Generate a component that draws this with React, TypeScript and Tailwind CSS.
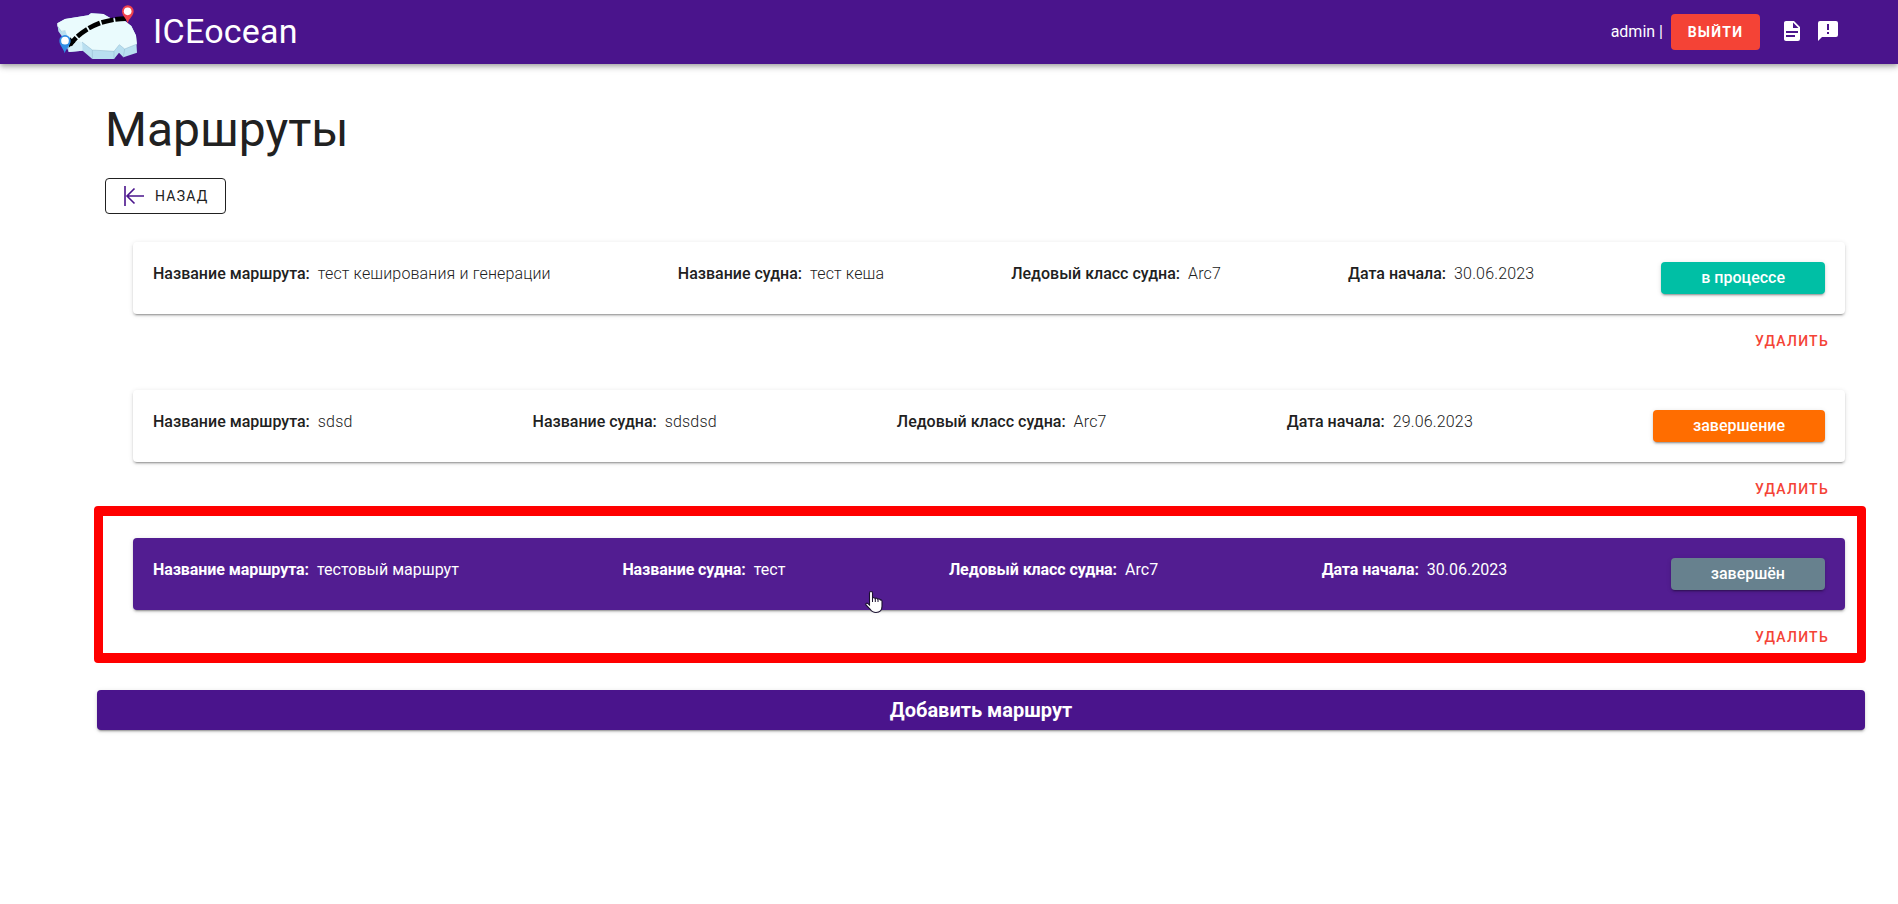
type Route = {
  name: string;
  ship: string;
  iceClass: string;
  date: string;
  status: string;
  chip: string;
  hovered?: boolean;
};

const routes: Route[] = [
  { name: "тест кеширования и генерации", ship: "тест кеша", iceClass: "Arc7", date: "30.06.2023", status: "в процессе", chip: "bg-[#00bfa5]" },
  { name: "sdsd", ship: "sdsdsd", iceClass: "Arc7", date: "29.06.2023", status: "завершение", chip: "bg-[#ff6d00]" },
  { name: "тестовый маршрут", ship: "тест", iceClass: "Arc7", date: "30.06.2023", status: "завершён", chip: "bg-[#67818e]", hovered: true },
];

function Logo() {
  return (
    <svg viewBox="0 0 300 192" className="h-16 w-[100px] shrink-0">
      <path d="M52 70 L75 57 L145 46 L153 40 L190 42 L212 55 L247 57 L274 78 L288 108 L291 158 L250 172 L237 158 L222 177 L157 177 L128 152 L86 156 L72 118 L55 94 Z" fill="#b9dff0" />
      <path d="M52 70 L75 57 L145 46 L153 40 L190 42 L212 55 L247 57 L274 78 L288 106 L291 132 L254 147 L238 134 L222 154 L157 150 L126 126 L88 124 L76 92 L66 96 L52 78 Z" fill="#eafbfd" />
      <path d="M88 124 L126 126 L128 152 L86 156 Z" fill="#d9f2fa" />
      <path d="M52 78 L64 94 L76 92 M126 126 L157 150 L222 154 L238 134 L254 147 L291 132 M157 150 V177 M222 154 V177 M254 147 L250 172" fill="none" stroke="#8fb6cc" strokeWidth="1.5" />
      <path d="M90 135 Q120 92 180 69 Q220 56 258 56" fill="none" stroke="#000" strokeWidth="14" strokeDasharray="37 5" strokeDashoffset="8" />
      <path d="M86 143 L90 112 L106 127 Z" fill="#000" />
      <path d="M263 70 C259 54 246 48 246 33 A17.500 17.500 0 0 1 281 33 C281 48 267 54 263 70 Z" fill="#f0434c" />
      <circle cx="263" cy="34" r="11.500" fill="#fff" />
      <path d="M74 160 C71 144 58 137 58 122 A17 17 0 0 1 92 122 C92 137 78 144 74 160 Z" fill="#2f8de4" />
      <circle cx="75" cy="122" r="11.500" fill="#fff" />
    </svg>
  );
}

function Header() {
  return (
    <header className="flex h-16 items-center bg-[#4a148c] pl-10 pr-[58px] text-white shadow-[0_2px_4px_-1px_rgba(0,0,0,0.2),0_4px_5px_rgba(0,0,0,0.14),0_1px_10px_rgba(0,0,0,0.12)]">
      <Logo />
      <span className="mb-0.5 ml-[13px] text-[34px] leading-10 tracking-[0.25px]">ICEocean</span>
      <span className="ml-auto text-base">admin |</span>
      <button className="ml-2 h-9 w-[89px] rounded bg-[#f44336] text-center text-sm font-bold tracking-[1.25px]">ВЫЙТИ</button>
      <div className="mb-0.5 ml-5 flex gap-3">
        <svg viewBox="0 0 24 24" fill="currentColor" className="size-6">
          <path d="M13 9h5.500L13 3.500V9M6 2h8l6 6v12a2 2 0 0 1-2 2H6c-1.110 0-2-.89-2-2V4c0-1.110.89-2 2-2m9 16v-2H6v2h9m3-4v-2H6v2h12Z" />
        </svg>
        <svg viewBox="0 0 24 24" fill="currentColor" className="size-6">
          <path d="M13 11h-2V5h2m0 10h-2v-2h2m7-11H4a2 2 0 0 0-2 2v18l4-4h14a2 2 0 0 0 2-2V4a2 2 0 0 0-2-2Z" />
        </svg>
      </div>
    </header>
  );
}

function Field({ label, value, hovered }: { label: string; value: string; hovered?: boolean }) {
  return (
    <div className="whitespace-nowrap">
      <span className={hovered ? "mr-2 font-bold tracking-[-0.08px]" : "mr-2 font-medium"}>{label}</span>
      <span className={hovered ? "font-normal" : "font-light tracking-[0.15px]"}>{value}</span>
    </div>
  );
}

function HandCursor() {
  return (
    <svg viewBox="0 0 18 24" className="absolute left-[732px] top-[52px] h-6 w-[18px]">
      <path
        d="M6 1.500c.9 0 1.500.6 1.500 1.500v5c.3-.5 2.400-.5 2.700.5.500-.6 2.300-.4 2.600.7.600-.5 2.200-.3 2.600.8.900-.3 1.600.3 1.600 1.300v5c0 3.700-2.300 6.200-6 6.200-3 0-4.500-1.200-6-3.500L1 15c-.8-1.400.8-2.400 2-1.400l1.500 1.400V3c0-.9.600-1.500 1.500-1.500Z"
        fill="#fff"
        stroke="#1a1030"
        strokeWidth="1.100"
      />
      <path d="M7.500 8v4M10.300 8.500V12M13 9.300V12" stroke="#1a1030" strokeWidth="1" />
    </svg>
  );
}

function RouteCard({ route }: { route: Route }) {
  return (
    <div className="relative h-[148px]">
      <div
        className={`flex h-[72px] items-start justify-between rounded px-5 pt-5 text-base leading-6 shadow-[0_3px_1px_-2px_rgba(0,0,0,0.2),0_2px_2px_rgba(0,0,0,0.14),0_1px_5px_rgba(0,0,0,0.12)] ${
          route.hovered ? "bg-[#521d91] text-white" : "bg-white text-[#212121]"
        }`}
      >
        <Field label="Название маршрута:" value={route.name} hovered={route.hovered} />
        <Field label="Название судна:" value={route.ship} hovered={route.hovered} />
        <Field label="Ледовый класс судна:" value={route.iceClass} hovered={route.hovered} />
        <Field label="Дата начала:" value={route.date} hovered={route.hovered} />
        <span className={`h-8 rounded px-10 font-medium leading-8 text-white shadow-[0_3px_1px_-2px_rgba(0,0,0,0.2),0_2px_2px_rgba(0,0,0,0.14),0_1px_5px_rgba(0,0,0,0.12)] ${route.chip}`}>
          {route.status}
        </span>
      </div>
      <div className="flex justify-end pr-4 pt-[9px]">
        <button className="h-9 text-sm font-medium tracking-[1.25px] text-[#f44336]">УДАЛИТЬ</button>
      </div>
      {route.hovered && (
        <>
          <div className="absolute -left-[39px] -top-8 h-[157px] w-[1772px] rounded border-x-9 border-y-10 border-[#ff0000]" />
          <HandCursor />
        </>
      )}
    </div>
  );
}

export default function App() {
  return (
    <div className="min-h-[904px] bg-white font-['Roboto',sans-serif] text-[#212121]">
      <Header />
      <main className="pl-[97px] pr-[33px] pt-[41px]">
        <div className="pl-2">
          <h1 className="h-[49px] text-[48px] font-normal leading-[50px]">Маршруты</h1>
          <button className="mt-6 flex h-9 w-[121px] items-center rounded border border-[#212121] pl-[17px] text-sm tracking-[1.25px]">
            <svg viewBox="0 0 22 22" className="mr-2.5 size-[22px]" fill="none" stroke="#4a148c" strokeWidth="1.600">
              <path d="M2 1v20M21 11H4M11.500 3.500 4 11l7.500 7.500" />
            </svg>
            НАЗАД
          </button>
        </div>
        <div className="mt-7 pl-9 pr-5">
          {routes.map((route) => (
            <RouteCard key={route.name} route={route} />
          ))}
        </div>
        <button className="mt-1 block h-10 w-full rounded bg-[#4a148c] text-xl font-bold text-white shadow-[0_3px_1px_-2px_rgba(0,0,0,0.2),0_2px_2px_rgba(0,0,0,0.14),0_1px_5px_rgba(0,0,0,0.12)]">
          Добавить маршрут
        </button>
      </main>
    </div>
  );
}
